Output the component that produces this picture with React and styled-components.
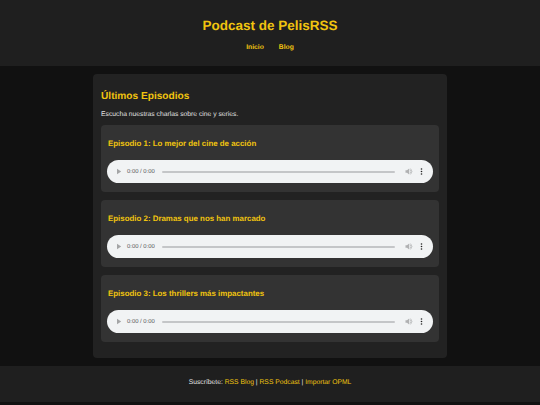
import React from "react";
import styled, { createGlobalStyle } from "styled-components";

const Global = createGlobalStyle`
  html, body { margin: 0; padding: 0; background: #111111; }
  body { font-family: "Liberation Sans", Arial, sans-serif; color: #e0e0e0; text-rendering: geometricPrecision; }
`;

const Page = styled.div`
  width: 540px;
  height: 405px;
  overflow: hidden;
  display: flex;
  flex-direction: column;
`;

const Header = styled.header`
  height: 66px;
  box-sizing: border-box;
  padding-top: 17px;
  background: #1f1f1f;
  text-align: center;
`;

const Title = styled.h1`
  margin: 0;
  font-size: 13.5px;
  line-height: 17px;
  font-weight: 700;
  color: #f1c40f;
`;

const Nav = styled.nav`
  margin-top: 10px;
  display: flex;
  justify-content: center;
  gap: 15px;
`;

const NavLink = styled.a`
  font-size: 6.75px;
  line-height: 8px;
  font-weight: 700;
  color: #f1c40f;
`;

const Main = styled.main`
  box-sizing: border-box;
  width: 354px;
  height: 284px;
  margin: 8px auto 0;
  padding: 17px 8px 0;
  background: #222222;
  border-radius: 4px;
`;

const SectionTitle = styled.h2`
  margin: 0;
  font-size: 10.15px;
  line-height: 12px;
  font-weight: 700;
  color: #f1c40f;
`;

const Intro = styled.p`
  margin: 8px 0 0;
  font-size: 6.75px;
  line-height: 8px;
  color: #e0e0e0;
`;

const EpisodeList = styled.div`
  margin-top: -2px;
`;

const Episode = styled.article`
  box-sizing: border-box;
  height: 67px;
  margin-top: 8px;
  padding: 14px 6px 0;
  background: #333333;
  border-radius: 4px;
`;

const EpisodeTitle = styled.h3`
  margin: 0;
  padding-left: 1px;
  font-size: 7.9px;
  line-height: 9px;
  font-weight: 700;
  color: #f1c40f;
`;

const Player = styled.div`
  box-sizing: border-box;
  height: 23px;
  margin-top: 12px;
  padding: 0 10px 0 9px;
  display: flex;
  align-items: center;
  background: #f1f3f4;
  border-radius: 12px;
`;

const PlayIcon = styled.svg`
  flex: none;
`;

const Time = styled.span`
  margin-left: 5px;
  font-size: 5.9px;
  color: #555;
  white-space: nowrap;
`;

const Track = styled.div`
  flex: 1;
  height: 2px;
  margin: 0 10px 0 7px;
  background: #c4c6c8;
  border-radius: 1px;
`;

const VolumeIcon = styled.svg`
  flex: none;
`;

const Dots = styled.svg`
  margin-left: 7px;
  flex: none;
`;

const Footer = styled.footer`
  height: 36px;
  margin-top: 8px;
  background: #1f1f1f;
  text-align: center;
  font-size: 6.75px;
  line-height: 34px;
  color: #e0e0e0;
`;

const FooterLink = styled.a`
  color: #f1c40f;
`;

const episodes = [
  "Episodio 1: Lo mejor del cine de acción",
  "Episodio 2: Dramas que nos han marcado",
  "Episodio 3: Los thrillers más impactantes",
];

export default function App() {
  return (
    <Page>
      <Global />
      <Header>
        <Title>Podcast de PelisRSS</Title>
        <Nav>
          <NavLink>Inicio</NavLink>
          <NavLink>Blog</NavLink>
        </Nav>
      </Header>
      <Main>
        <SectionTitle>Últimos Episodios</SectionTitle>
        <Intro>Escucha nuestras charlas sobre cine y series.</Intro>
        <EpisodeList>
          {episodes.map((t) => (
            <Episode key={t}>
              <EpisodeTitle>{t}</EpisodeTitle>
              <Player>
                <PlayIcon width="6" height="7" viewBox="0 0 6 7"><path d="M1 0.8 L5.2 3.5 L1 6.2 Z" fill="#a4a5a6" /></PlayIcon>
                <Time>0:00 / 0:00</Time>
                <Track />
                <VolumeIcon width="8" height="7" viewBox="0 0 8 7">
                  <path d="M0.5 2.3 H2 L4.2 0.6 V6.4 L2 4.7 H0.5 Z" fill="#b0b1b2" />
                  <path d="M5 1.6 Q7 3.5 5 5.4 M5.6 0.6 Q8.4 3.5 5.6 6.4" fill="none" stroke="#b0b1b2" strokeWidth="0.7" />
                </VolumeIcon>
                <Dots width="3" height="7" viewBox="0 0 3 7">
                  <circle cx="1.5" cy="1" r="0.8" fill="#222" />
                  <circle cx="1.5" cy="3.5" r="0.8" fill="#222" />
                  <circle cx="1.5" cy="6" r="0.8" fill="#222" />
                </Dots>
              </Player>
            </Episode>
          ))}
        </EpisodeList>
      </Main>
      <Footer>
        Suscríbete: <FooterLink>RSS Blog</FooterLink> | <FooterLink>RSS Podcast</FooterLink> | <FooterLink>Importar OPML</FooterLink>
      </Footer>
    </Page>
  );
}
